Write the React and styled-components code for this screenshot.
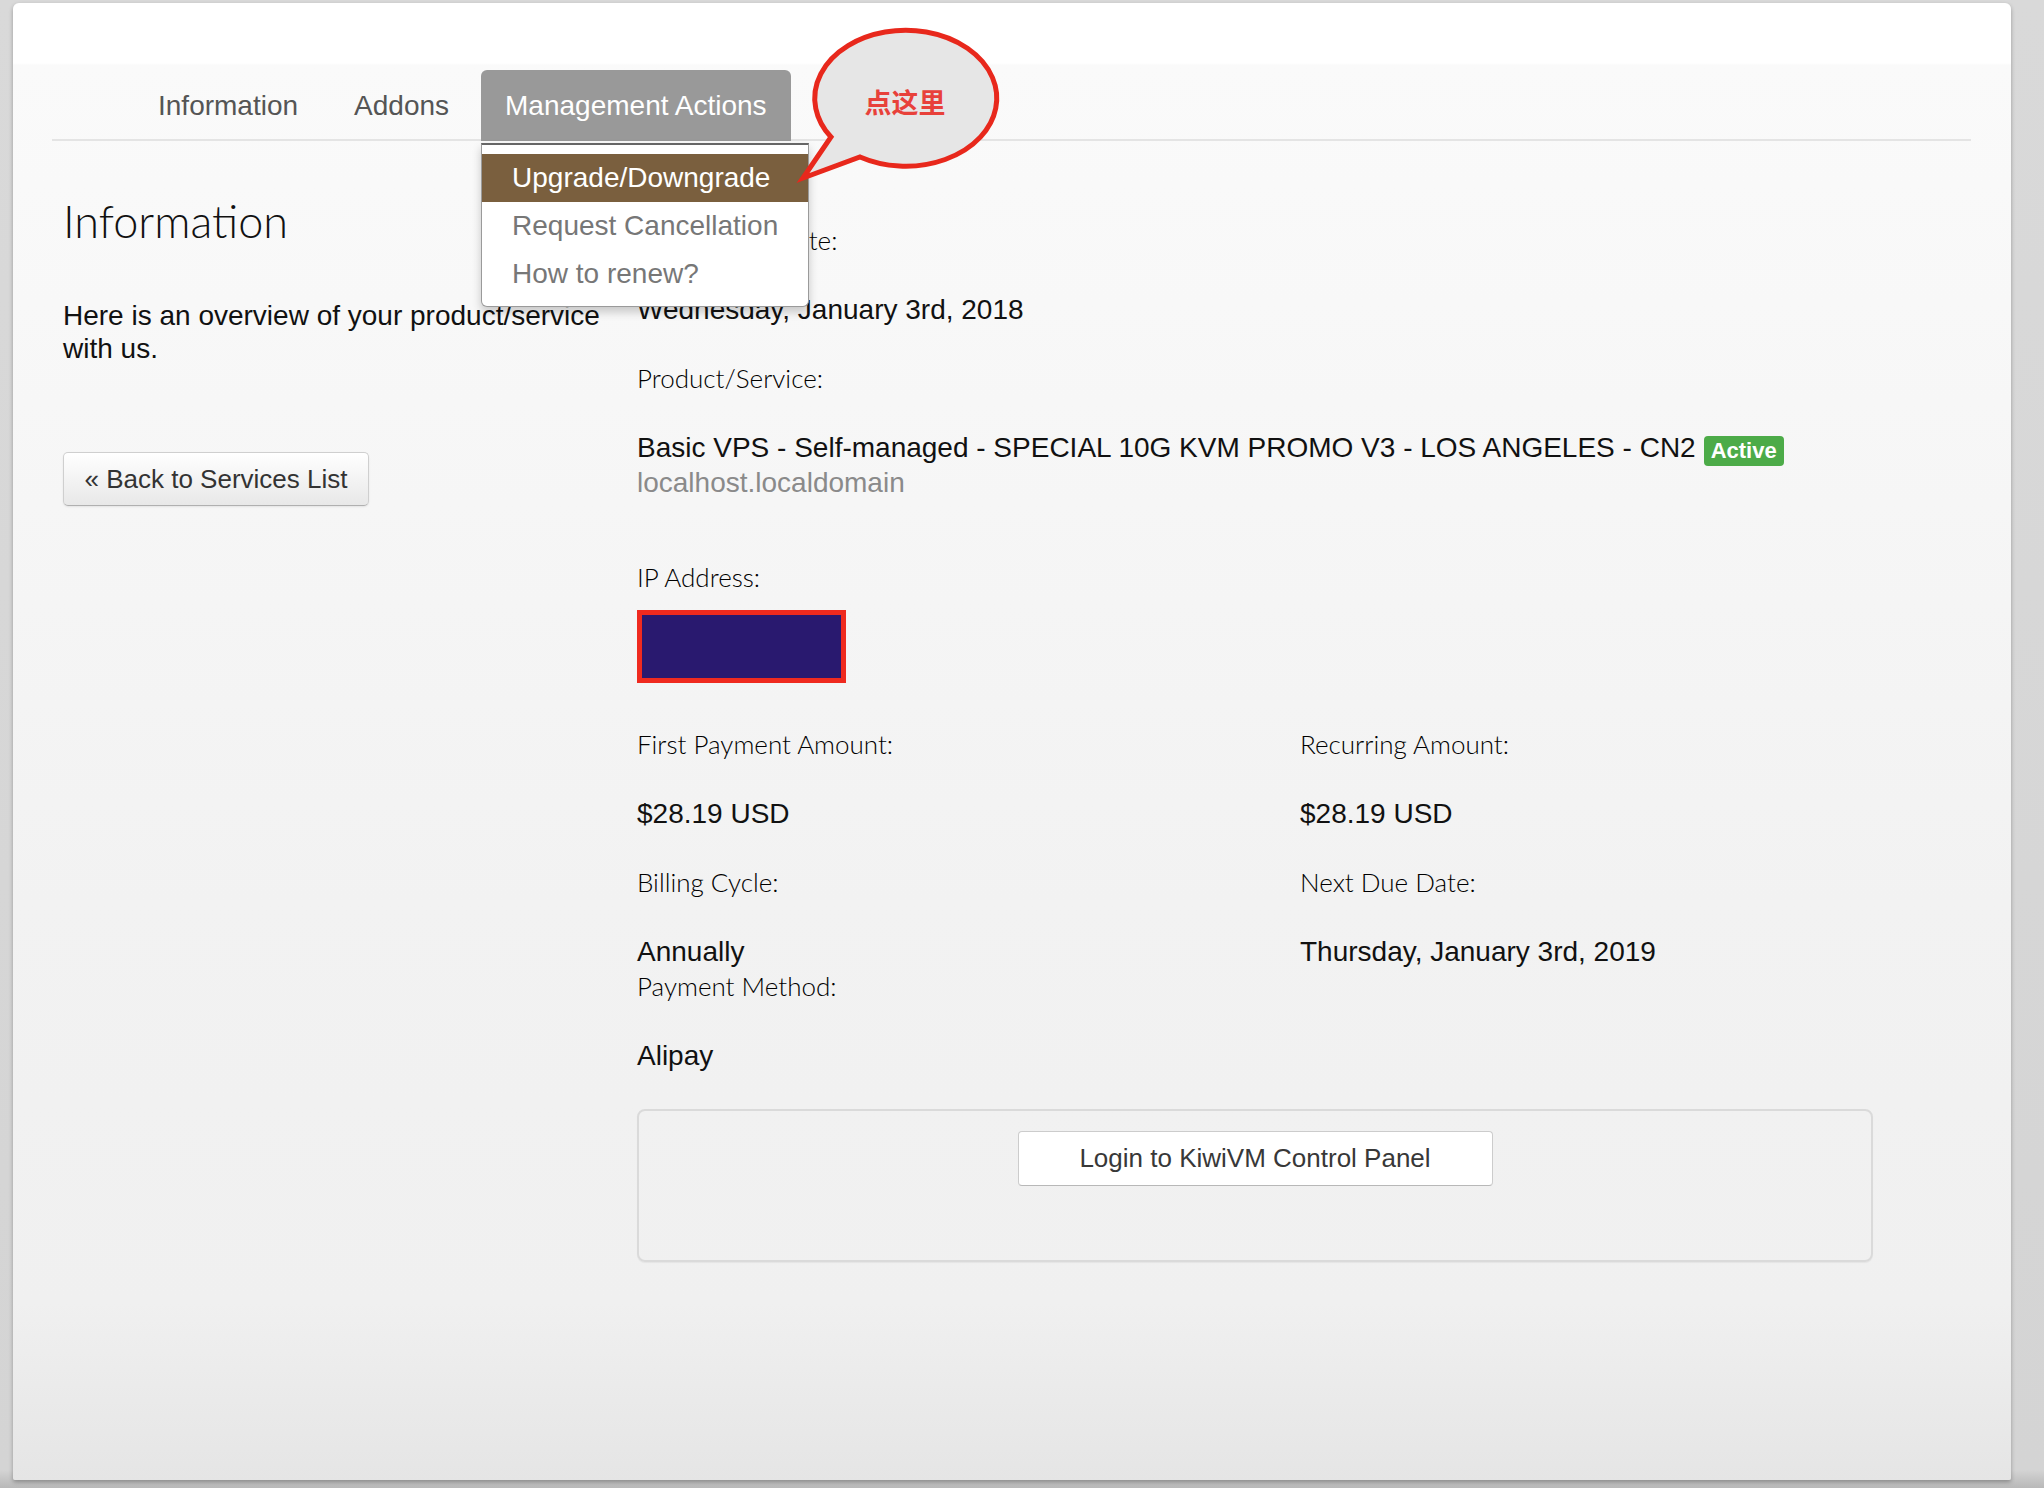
import React from 'react';
import styled, { createGlobalStyle } from 'styled-components';

const GlobalStyle = createGlobalStyle`
  html, body {
    margin: 0;
    padding: 0;
    background: #d7d7d7;
  }
  body {
    font-family: "Liberation Sans", Arial, sans-serif;
    color: #111;
  }
  * { box-sizing: border-box; }
`;

const Page = styled.div`
  width: 2044px;
  height: 1488px;
  padding: 3px 33px 8px 13px;
  background: linear-gradient(to bottom, #d9d9d9 0, #d4d4d4 1470px, #b8b8b8 1488px);
`;

const Card = styled.div`
  height: 1477px;
  padding: 67px 40px 0 39px;
  border-radius: 6px 6px 2px 2px;
  background: linear-gradient(
    to bottom,
    #ffffff 0,
    #ffffff 60px,
    #fafafa 62px,
    #f8f8f8 300px,
    #f2f2f2 900px,
    #f0f0f0 1300px,
    #e5e5e5 1477px
  );
  box-shadow: 0 2px 4px rgba(0, 0, 0, 0.3);
`;

const TabBar = styled.ul`
  position: relative;
  display: flex;
  align-items: flex-end;
  height: 71px;
  margin: 0;
  padding: 0 0 0 82px;
  list-style: none;
  border-bottom: 2px solid #e4e4e4;
`;

const Tab = styled.li`
  position: relative;
  height: 71px;
  margin: 0 8px -2px 0;
  padding: 0 24px;
  line-height: 71px;
  font-size: 28px;
  border-radius: 6px 6px 0 0;
  color: ${(p) => (p.$active ? '#fff' : '#555')};
  background: ${(p) => (p.$active ? '#999999' : 'transparent')};
  cursor: pointer;
`;

const Dropdown = styled.ul`
  position: absolute;
  top: calc(100% + 2px);
  left: 0;
  z-index: 5;
  width: 328px;
  margin: 0;
  padding: 9px 0 8px;
  list-style: none;
  background: #fff;
  border: 1px solid #9a9a9a;
  border-top: 2px solid #666;
  border-radius: 0 0 6px 6px;
  box-shadow: 0 5px 10px rgba(0, 0, 0, 0.2);
`;

const MenuItem = styled.li`
  height: 48px;
  padding-left: 30px;
  line-height: 48px;
  font-size: 28px;
  white-space: nowrap;
  color: ${(p) => (p.$active ? '#fff' : '#777')};
  background: ${(p) => (p.$active ? '#7a5f3e' : 'transparent')};
`;

const Bubble = styled.svg`
  position: absolute;
  left: 743px;
  top: -45px;
  z-index: 6;
  overflow: visible;
`;

const Content = styled.div`
  display: grid;
  grid-template-columns: 560px 1238px;
  column-gap: 14px;
  padding-left: 11px;
`;

const Sidebar = styled.div`
  padding-top: 54px;
`;

const Heading = styled.h2`
  margin: 0 0 52px;
  font-family: Lato, "Open Sans", sans-serif;
  font-weight: 300;
  font-size: 45px;
  line-height: 52px;
  color: #111;
`;

const Intro = styled.p`
  margin: 0 0 87px;
  font-size: 28px;
  line-height: 33px;
  color: #111;
`;

const BackButton = styled.button`
  width: 306px;
  height: 54px;
  padding: 0;
  font-family: "Liberation Sans", Arial, sans-serif;
  font-size: 26px;
  color: #333;
  background: linear-gradient(to bottom, #ffffff, #e8e8e8);
  border: 1px solid #cfcfcf;
  border-bottom-color: #b0b0b0;
  border-radius: 5px;
  box-shadow: 0 1px 2px rgba(0, 0, 0, 0.08);
  cursor: pointer;
`;

const Details = styled.div`
  padding-top: 82px;
`;

const Label = styled.div`
  margin-bottom: 36px;
  font-family: Lato, "Open Sans", sans-serif;
  font-weight: 300;
  font-size: 26px;
  line-height: 34px;
  color: #000;
  white-space: nowrap;
`;

const Value = styled.div`
  margin-bottom: ${(p) => (p.$tight ? '0' : '34px')};
  font-size: 28px;
  line-height: 34px;
  color: #111;
  white-space: nowrap;
`;

const Product = styled.div`
  margin-bottom: 60px;
  font-size: 28px;
  line-height: 34px;
  white-space: nowrap;
`;

const Hostname = styled.div`
  color: #8a8a8a;
`;

const Badge = styled.span`
  display: inline-block;
  margin-left: 8px;
  padding: 0 7px;
  height: 30px;
  line-height: 30px;
  vertical-align: -1px;
  font-size: 22px;
  font-weight: bold;
  color: #fff;
  background: #4cab48;
  border-radius: 4px;
`;

const IpBox = styled.div`
  width: 209px;
  height: 73px;
  margin: -20px 0 44px;
  background: #29196f;
  border: 5px solid #ef2a1f;
`;

const Columns = styled.div`
  display: grid;
  grid-template-columns: 663px 1fr;
`;

const Stack = styled.div`
  display: flex;
  flex-direction: column;
`;

const LoginBox = styled.div`
  display: flex;
  justify-content: center;
  width: 1236px;
  height: 153px;
  margin-top: 2px;
  padding-top: 20px;
  border: 2px solid #dadada;
  border-radius: 8px;
  box-shadow: 0 1px 1px rgba(0, 0, 0, 0.05);
`;

const LoginButton = styled.button`
  width: 475px;
  height: 55px;
  font-family: "Liberation Sans", Arial, sans-serif;
  font-size: 26px;
  color: #383838;
  background: #fff;
  border: 1px solid #cccccc;
  border-bottom-color: #b8b8b8;
  border-radius: 4px;
  cursor: pointer;
`;

const SpeechBubble = () => (
  <Bubble width="210" height="170" viewBox="0 0 210 170">
    <path
      d="M65 132 A91 68 0 1 0 36 112 L8 153 Z"
      fill="#e6e6e6"
      stroke="#e8281c"
      strokeWidth="5"
      strokeLinejoin="miter"
    />
    <text
      x="110"
      y="76"
      textAnchor="middle"
      dominantBaseline="central"
      fontFamily='"Noto Sans CJK SC", sans-serif'
      fontWeight="700"
      fontSize="27"
      fill="#e8413a"
    >
      点这里
    </text>
  </Bubble>
);

const App = () => {
  return (
    <Page>
      <GlobalStyle />
      <Card>
        <TabBar>
          <Tab>Information</Tab>
          <Tab>Addons</Tab>
          <Tab $active>
            Management Actions
            <Dropdown>
              <MenuItem $active>Upgrade/Downgrade</MenuItem>
              <MenuItem>Request Cancellation</MenuItem>
              <MenuItem>How to renew?</MenuItem>
            </Dropdown>
          </Tab>
          <SpeechBubble />
        </TabBar>

        <Content>
          <Sidebar>
            <Heading>Information</Heading>
            <Intro>Here is an overview of your product/service with us.</Intro>
            <BackButton>« Back to Services List</BackButton>
          </Sidebar>

          <Details>
            <Label>Registration Date:</Label>
            <Value>Wednesday, January 3rd, 2018</Value>

            <Label>Product/Service:</Label>
            <Product>
              Basic VPS - Self-managed - SPECIAL 10G KVM PROMO V3 - LOS ANGELES - CN2
              <Badge>Active</Badge>
              <Hostname>localhost.localdomain</Hostname>
            </Product>

            <Label>IP Address:</Label>
            <IpBox />

            <Columns>
              <Stack>
                <Label>First Payment Amount:</Label>
                <Value>$28.19 USD</Value>
                <Label>Billing Cycle:</Label>
                <Value $tight>Annually</Value>
                <Label>Payment Method:</Label>
                <Value>Alipay</Value>
              </Stack>
              <Stack>
                <Label>Recurring Amount:</Label>
                <Value>$28.19 USD</Value>
                <Label>Next Due Date:</Label>
                <Value>Thursday, January 3rd, 2019</Value>
              </Stack>
            </Columns>

            <LoginBox>
              <LoginButton>Login to KiwiVM Control Panel</LoginButton>
            </LoginBox>
          </Details>
        </Content>
      </Card>
    </Page>
  );
};

export default App;
